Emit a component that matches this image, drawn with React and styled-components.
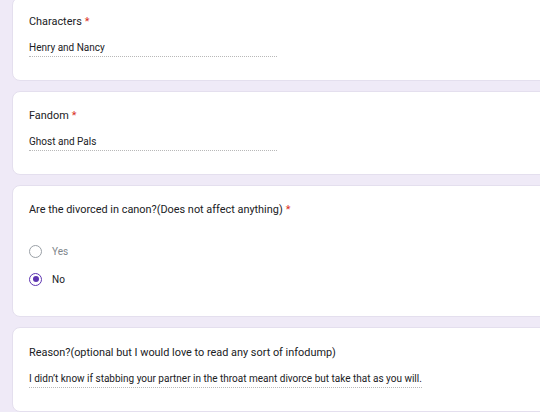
import React from 'react';
import styled, { createGlobalStyle } from 'styled-components';

const GlobalStyle = createGlobalStyle`
    body {
        margin: 0;
        background: #efeaf7;
        font-family: Roboto, "Liberation Sans", Arial, sans-serif;
        overflow: hidden;
    }
`;

const Page = styled.div`
    display: flex;
    flex-direction: column;
    gap: 10px;
    padding-left: 12px;
    margin-top: -3px;
    width: 580px;
`;

const Card = styled.div`
    background: #ffffff;
    border-radius: 8px;
    border: 1px solid #e4dfee;
    padding: ${(p) => p.$top || 16}px 0 23px 16px;
`;

const Title = styled.div`
    font-size: 10.9px;
    line-height: 16px;
    color: #202124;
`;

const Star = styled.span`
    color: #d93025;
    margin-left: 3px;
`;

const Answer = styled.div`
    display: ${(p) => (p.$wide ? 'inline-block' : 'block')};
    width: ${(p) => (p.$wide ? 'auto' : '248px')};
    margin-top: 11px;
    padding-bottom: 1px;
    font-size: 10px;
    line-height: 14px;
    color: #202124;
    border-bottom: 1px dotted #b8b8b8;
`;

const Options = styled.div`
    display: flex;
    flex-direction: column;
    margin-top: 19px;
`;

const Option = styled.div`
    display: flex;
    align-items: center;
    height: 28px;
    gap: 10px;
    font-size: 10px;
    color: ${(p) => (p.$checked ? '#202124' : '#80868b')};
`;

const Radio = styled.span`
    box-sizing: border-box;
    width: 13px;
    height: 13px;
    border-radius: 50%;
    border: 1.6px solid ${(p) => (p.$checked ? '#5e35b1' : '#9aa0a6')};
    display: flex;
    align-items: center;
    justify-content: center;

    &::after {
        content: '';
        display: ${(p) => (p.$checked ? 'block' : 'none')};
        width: 6px;
        height: 6px;
        border-radius: 50%;
        background: #5e35b1;
    }
`;

const ShortQuestion = ({ title, required, answer, wide, top }) => (
    <Card $top={top}>
        <Title>
            {title}
            {required && <Star>*</Star>}
        </Title>
        <div>
            <Answer $wide={wide}>{answer}</Answer>
        </div>
    </Card>
);

export default function App() {
    return (
        <>
            <GlobalStyle />
            <Page>
                <ShortQuestion title="Characters" required answer="Henry and Nancy" />
                <ShortQuestion title="Fandom" required answer="Ghost and Pals" />
                <Card>
                    <Title>
                        Are the divorced in canon?(Does not affect anything)
                        <Star>*</Star>
                    </Title>
                    <Options>
                        <Option>
                            <Radio />
                            Yes
                        </Option>
                        <Option $checked>
                            <Radio $checked />
                            No
                        </Option>
                    </Options>
                </Card>
                <ShortQuestion
                    top={17}
                    title="Reason?(optional but I would love to read any sort of infodump)"
                    answer="I didn’t know if stabbing your partner in the throat meant divorce but take that as you will."
                    wide
                />
            </Page>
        </>
    );
}
